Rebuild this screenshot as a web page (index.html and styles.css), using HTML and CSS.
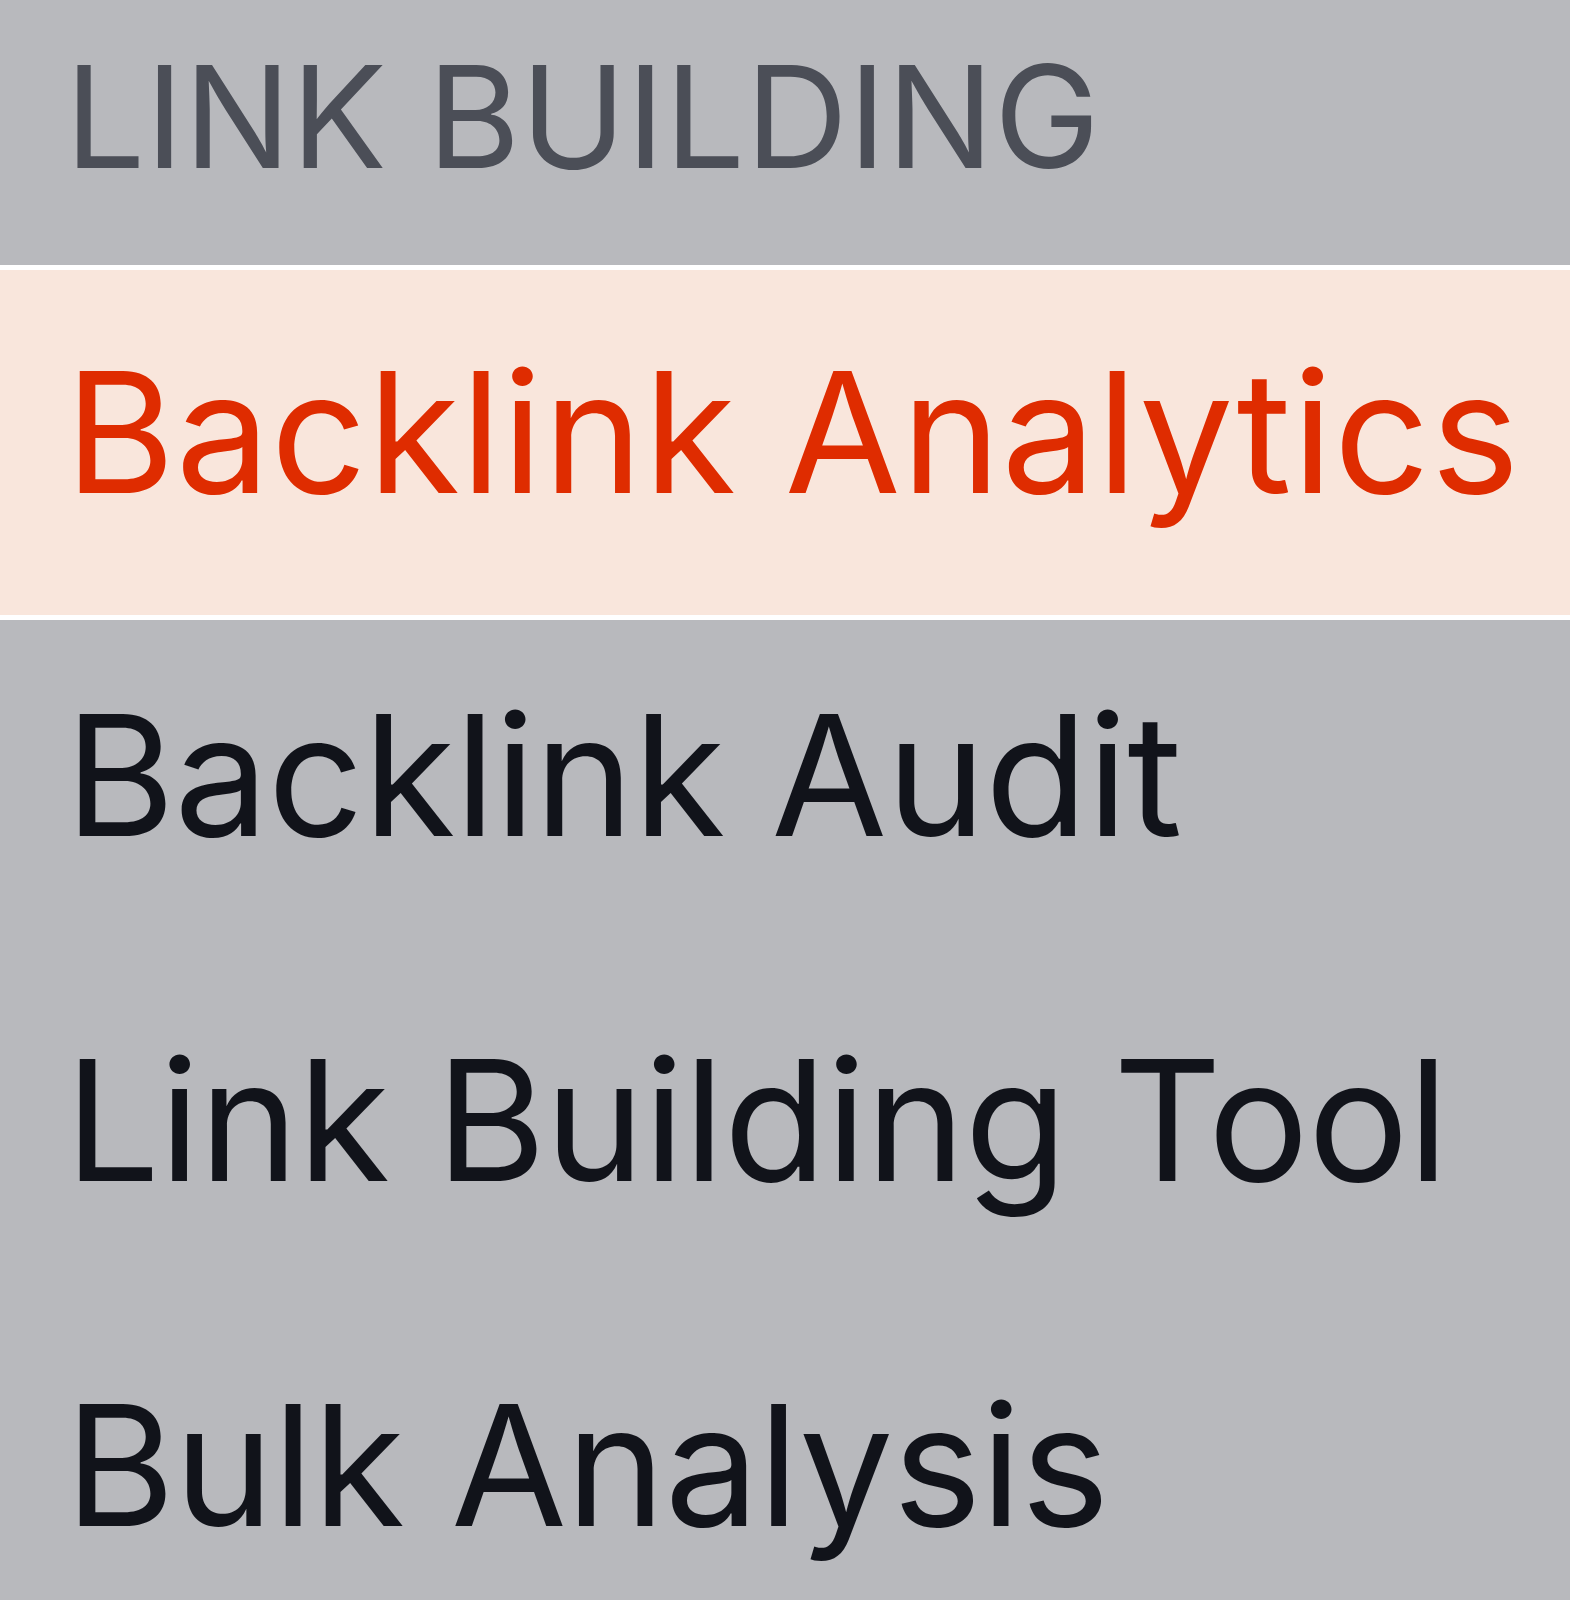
FILE: index.html
```html
<!DOCTYPE html>
<html lang="en">
<head>
    <meta charset="UTF-8">
    <meta name="viewport" content="width=device-width, initial-scale=1.0">
    <title>Link Building</title>
    <link rel="stylesheet" href="styles.css">
</head>
<body>

    <nav class="menu">
        <div class="menu-title">LINK BUILDING</div>
        <a class="menu-item active" href="#">Backlink Analytics</a>
        <a class="menu-item" href="#">Backlink Audit</a>
        <a class="menu-item" href="#">Link Building Tool</a>
        <a class="menu-item" href="#">Bulk Analysis</a>
    </nav>

</body>
</html>
```

FILE: styles.css
```css
body {
    margin: 0;
    background-color: #b8b9bd;
    font-family: Inter, "Noto Sans", sans-serif;
}
.menu {
    display: flex;
    flex-direction: column;
    min-height: 1600px;
    background-color: #b8b9bd;
}
.menu-title {
    height: 265px;
    box-sizing: border-box;
    padding: 45px 0 0 65px;
    font-size: 142px;
    line-height: 1;
    letter-spacing: 0.3px;
    color: #4b4e57;
}
.menu-item {
    display: block;
    height: 345px;
    box-sizing: border-box;
    padding: 71px 0 0 65px;
    font-size: 168px;
    line-height: 1;
    letter-spacing: -0.7px;
    color: #11131a;
    text-decoration: none;
}
.menu-item.active {
    height: 355px;
    padding-top: 78px;
    background-color: #f9e6dc;
    border-top: 5px solid #ffffff;
    border-bottom: 5px solid #ffffff;
    color: #df2c00;
    letter-spacing: 0.8px;
}
```
